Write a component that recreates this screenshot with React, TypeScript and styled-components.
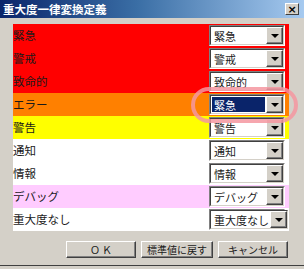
import React from "react";
import styled, { createGlobalStyle } from "styled-components";

const Global = createGlobalStyle`
  html, body { margin: 0; padding: 0; background: #d4d0c8; }
  body { width: 304px; height: 269px; overflow: hidden; font-family: "Noto Sans CJK JP", "Noto Sans", sans-serif; }
`;

const Window = styled.div`
  position: relative;
  width: 304px;
  height: 266px;
  box-sizing: border-box;
  background: #d4d0c8;
  border-bottom: 1px solid #404040;
  display: flex;
  flex-direction: column;
`;

const TitleBar = styled.div`
  height: 18px;
  display: flex;
  align-items: center;
  justify-content: space-between;
  padding: 0 5px 0 3px;
  background: linear-gradient(to right, #0a246a 0%, #3a6ea5 45%, #a6caf0 100%);
`;

const Title = styled.span`
  color: #ffffff;
  font-weight: bold;
  font-size: 11.5px;
  line-height: 18px;
`;

const CloseButton = styled.div`
  width: 14px;
  height: 12px;
  box-sizing: border-box;
  background: #d4d0c8;
  border-top: 1px solid #ffffff;
  border-left: 1px solid #ffffff;
  border-right: 1px solid #404040;
  border-bottom: 1px solid #404040;
  display: flex;
  align-items: center;
  justify-content: center;
  font-size: 11px;
  font-weight: bold;
  line-height: 1;
  color: #000;
  font-family: "DejaVu Sans", sans-serif;
`;

const Body = styled.div`
  padding: 6px 15px 0 13px;
  display: flex;
  flex-direction: column;
`;

const Panel = styled.div`
  width: 276px;
  display: flex;
  flex-direction: column;
  background: #ffffff;
`;

const Row = styled.div<{ $bg: string }>`
  height: 23px;
  background: ${(p) => p.$bg};
  display: flex;
  align-items: center;
  justify-content: space-between;
  padding: 0 4px 0 0;
`;

const Label = styled.span`
  font-size: 11.5px;
  color: #1a1a1a;
  line-height: 23px;
`;

const Select = styled.div`
  width: 76px;
  height: 21px;
  box-sizing: border-box;
  border-top: 1px solid #808080;
  border-left: 1px solid #808080;
  border-right: 1px solid #ffffff;
  border-bottom: 1px solid #ffffff;
  display: flex;
`;

const SelectInner = styled.div`
  flex: 1;
  display: flex;
  border-top: 1px solid #404040;
  border-left: 1px solid #404040;
  border-right: 1px solid #d4d0c8;
  border-bottom: 1px solid #d4d0c8;
  background: #ffffff;
`;

const SelectText = styled.div<{ $active?: boolean }>`
  flex: 1;
  display: flex;
  align-items: center;
  font-size: 11px;
  padding-left: 2px;
  margin: 1px 1px 1px 1px;
  color: ${(p) => (p.$active ? "#ffffff" : "#1a1a1a")};
  background: ${(p) => (p.$active ? "#0a246a" : "#ffffff")};
  white-space: nowrap;
  overflow: hidden;
`;

const ArrowButton = styled.div`
  width: 17px;
  box-sizing: border-box;
  background: #d4d0c8;
  border-top: 1px solid #ffffff;
  border-left: 1px solid #ffffff;
  border-right: 1px solid #404040;
  border-bottom: 1px solid #404040;
  box-shadow: inset -1px -1px 0 #808080;
  display: flex;
  align-items: center;
  justify-content: center;
`;

const Footer = styled.div`
  display: flex;
  justify-content: flex-end;
  gap: 5px;
  margin-top: 10px;
  padding-right: 1px;
`;

const Button = styled.div<{ $w: number }>`
  width: ${(p) => p.$w}px;
  height: 17px;
  box-sizing: border-box;
  background: #d4d0c8;
  border-top: 1px solid #ffffff;
  border-left: 1px solid #ffffff;
  border-right: 1px solid #404040;
  border-bottom: 1px solid #404040;
  box-shadow: inset -1px -1px 0 #808080;
  display: flex;
  align-items: center;
  justify-content: center;
  font-size: 10px;
  color: #1a1a1a;
  white-space: nowrap;
`;

const Highlight = styled.div`
  position: absolute;
  left: 191px;
  top: 87px;
  width: 107px;
  height: 36px;
  box-sizing: border-box;
  border: 4px solid rgba(244, 150, 160, 0.85);
  border-radius: 18px;
  pointer-events: none;
`;

const Arrow = () => (
  <svg width="8" height="4" viewBox="0 0 8 4">
    <polygon points="0,0 8,0 4,4" fill="#000" />
  </svg>
);

const rows: { label: string; value: string; bg: string; active?: boolean }[] = [
  { label: "緊急", value: "緊急", bg: "#ff0000" },
  { label: "警戒", value: "警戒", bg: "#ff0000" },
  { label: "致命的", value: "致命的", bg: "#ff0000" },
  { label: "エラー", value: "緊急", bg: "#ff8000", active: true },
  { label: "警告", value: "警告", bg: "#ffff00" },
  { label: "通知", value: "通知", bg: "#ffffff" },
  { label: "情報", value: "情報", bg: "#ffffff" },
  { label: "デバッグ", value: "デバッグ", bg: "#ffccff" },
  { label: "重大度なし", value: "重大度なし", bg: "#ffffff" },
];

export default function App() {
  return (
    <>
      <Global />
      <Window>
        <TitleBar>
          <Title>重大度一律変換定義</Title>
          <CloseButton>×</CloseButton>
        </TitleBar>
        <Body>
          <Panel>
            {rows.map((r) => (
              <Row key={r.label} $bg={r.bg}>
                <Label>{r.label}</Label>
                <Select>
                  <SelectInner>
                    <SelectText $active={r.active}>{r.value}</SelectText>
                    <ArrowButton>
                      <Arrow />
                    </ArrowButton>
                  </SelectInner>
                </Select>
              </Row>
            ))}
          </Panel>
          <Footer>
            <Button $w={70}>Ｏ Ｋ</Button>
            <Button $w={72}>標準値に戻す</Button>
            <Button $w={70}>キャンセル</Button>
          </Footer>
        </Body>
        <Highlight />
      </Window>
    </>
  );
}
